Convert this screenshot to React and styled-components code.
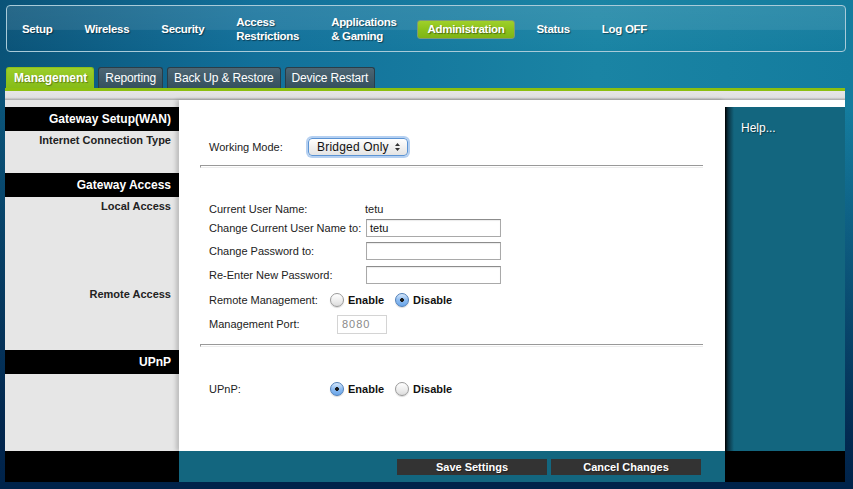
import React from "react";
import styled, { createGlobalStyle } from "styled-components";

const GlobalStyle = createGlobalStyle`
	html, body {
		margin: 0;
		padding: 0;
	}
	body {
		width: 853px;
		height: 489px;
		overflow: hidden;
		font-family: "Liberation Sans", Arial, sans-serif;
		background:
			linear-gradient(180deg, rgba(0, 20, 50, 0) 0, rgba(0, 20, 50, 0) 110px, rgba(0, 30, 70, 0.85) 430px, #00234a 480px),
			linear-gradient(90deg, #0a5378 0, #12709a 30%, #1a84a4 70%, #147c9e 100%);
	}
`;

const navItems = [
	{ label: "Setup" },
	{ label: "Wireless" },
	{ label: "Security" },
	{ label: ["Access", "Restrictions"] },
	{ label: ["Applications", "& Gaming"] },
	{ label: "Administration", active: true },
	{ label: "Status" },
	{ label: "Log OFF" },
];

const tabs = [
	{ label: "Management", active: true },
	{ label: "Reporting" },
	{ label: "Back Up & Restore" },
	{ label: "Device Restart" },
];

function Radio({ checked, label }) {
	return (
		<RadioWrap>
			<RadioDot checked={checked} />
			<RadioLabel>{label}</RadioLabel>
		</RadioWrap>
	);
}

function App() {
	return (
		<>
			<GlobalStyle />
			<Page>
				<NavBox>
					{navItems.map((item, i) => (
						<NavItem key={i} active={item.active}>
							{Array.isArray(item.label)
								? item.label.map((l) => <span key={l}>{l}</span>)
								: item.label}
						</NavItem>
					))}
				</NavBox>

				<Tabs>
					{tabs.map((t) => (
						<Tab key={t.label} active={t.active}>
							{t.label}
						</Tab>
					))}
				</Tabs>

				<Frame>
					<GreyStrip />
					<Columns>
						<Side>
							<SectionBar>Gateway Setup(WAN)</SectionBar>
							<SideArea h={42}>
								<SideLabel>Internet Connection Type</SideLabel>
							</SideArea>
							<SectionBar>Gateway Access</SectionBar>
							<SideArea h={153}>
								<SideLabel>Local Access</SideLabel>
								<SideLabel top={75}>Remote Access</SideLabel>
							</SideArea>
							<SectionBar>UPnP</SectionBar>
						</Side>

						<Content>
							<Row h={24}>
								<Label w={99}>Working Mode:</Label>
								<Select>
									<span>Bridged Only</span>
									<svg width="7" height="10" viewBox="0 0 7 10">
										<path d="M3.5 1 L6 4 L1 4 Z M3.5 9 L6 6 L1 6 Z" fill="#333" />
									</svg>
								</Select>
							</Row>
							<Rule />
							<Row h={16} top={33}>
								<Label w={156}>Current User Name:</Label>
								<Value>tetu</Value>
							</Row>
							<Row h={22}>
								<Label w={157}>Change Current User Name to:</Label>
								<TextInput>tetu</TextInput>
							</Row>
							<Row h={24}>
								<Label w={157}>Change Password to:</Label>
								<TextInput />
							</Row>
							<Row h={24}>
								<Label w={157}>Re-Enter New Password:</Label>
								<TextInput />
							</Row>
							<Row h={26}>
								<Label w={121}>Remote Management:</Label>
								<Radio label="Enable" />
								<Radio checked label="Disable" />
							</Row>
							<Row h={22}>
								<Label w={128}>Management Port:</Label>
								<PortInput>8080</PortInput>
							</Row>
							<Rule top={9} />
							<Row h={24} top={30}>
								<Label w={121}>UPnP:</Label>
								<Radio checked label="Enable" />
								<Radio label="Disable" />
							</Row>
						</Content>

						<Help>
							<HelpText>Help...</HelpText>
						</Help>
					</Columns>

					<Footer>
						<FooterSide />
						<FooterMain>
							<ActionButton>Save Settings</ActionButton>
							<ActionButton>Cancel Changes</ActionButton>
						</FooterMain>
						<FooterSide />
					</Footer>
				</Frame>
			</Page>
		</>
	);
}

export default App;

const Page = styled.div`
	width: 853px;
	height: 489px;
	padding-top: 5px;
	box-sizing: border-box;
`;

const NavBox = styled.div`
	margin-left: 6px;
	width: 840px;
	height: 47px;
	box-sizing: border-box;
	border: 1px solid #a9cbd9;
	border-radius: 4px;
	display: flex;
	align-items: center;
	gap: 10px;
	padding: 1px 0 0 4px;
	background: linear-gradient(
		180deg,
		rgba(255, 255, 255, 0.12) 0,
		rgba(255, 255, 255, 0.1) 52%,
		rgba(255, 255, 255, 0.02) 54%,
		rgba(255, 255, 255, 0) 100%
	);
`;

const NavItem = styled.div`
	display: flex;
	flex-direction: column;
	justify-content: center;
	padding: 0 10px;
	height: ${(p) => (p.active ? "17px" : "auto")};
	font-size: 11.5px;
	letter-spacing: -0.3px;
	font-weight: bold;
	line-height: 14px;
	color: #fff;
	text-shadow: 1px 1px 1px rgba(0, 0, 0, 0.45);
	white-space: nowrap;
	border-radius: 3px;
	border: 1px solid ${(p) => (p.active ? "#7d9a78" : "transparent")};
	background: ${(p) =>
		p.active ? "linear-gradient(180deg, #9fd02a 0, #8cc21c 50%, #7fb515 100%)" : "none"};
	margin: ${(p) => (p.active ? "0 0 0 -1px" : "0")};
`;

const Tabs = styled.div`
	display: flex;
	gap: 4px;
	margin: 15px 0 0 6px;
	height: 21px;
	align-items: flex-end;
`;

const Tab = styled.div`
	height: 21px;
	box-sizing: border-box;
	padding: 0 6px 0 ${(p) => (p.active ? "7px" : "6px")};
	display: flex;
	align-items: center;
	font-size: 12px;
	letter-spacing: ${(p) => (p.active ? "0" : "-0.15px")};
	font-weight: ${(p) => (p.active ? "bold" : "normal")};
	color: #fff;
	text-shadow: ${(p) => (p.active ? "1px 1px 1px rgba(0,0,0,0.35)" : "none")};
	border-radius: 3px 3px 0 0;
	border: 1px solid ${(p) => (p.active ? "#8cbf1a" : "#2a3d48")};
	border-bottom: none;
	background: ${(p) =>
		p.active
			? "linear-gradient(180deg, #9bce2a 0, #86bc18 100%)"
			: "linear-gradient(180deg, #4d6674 0, #34505e 100%)"};
`;

const Frame = styled.div`
	margin-left: 5px;
	width: 840px;
	border-top: 3px solid #8cbf10;
`;

const GreyStrip = styled.div`
	height: 9px;
	background: linear-gradient(180deg, #e6e6e6 0, #e0e0e0 70%, #a9a9a9 100%);
`;

const Columns = styled.div`
	display: grid;
	grid-template-columns: 174px 546px 120px;
	height: 351px;
`;

const Side = styled.div`
	background: #e6e6e6;
	padding-top: 7px;
	display: flex;
	flex-direction: column;
`;

const SectionBar = styled.div`
	height: 24px;
	background: #000;
	color: #fff;
	font-size: 12px;
	font-weight: bold;
	display: flex;
	align-items: center;
	justify-content: flex-end;
	padding-right: 8px;
	flex-shrink: 0;
`;

const SideArea = styled.div`
	height: ${(p) => p.h}px;
	display: flex;
	flex-direction: column;
	align-items: flex-end;
	padding: 3px 8px 0 0;
	box-sizing: border-box;
`;

const SideLabel = styled.div`
	font-size: 11px;
	line-height: 13px;
	font-weight: bold;
	color: #222;
	margin-top: ${(p) => p.top || 0}px;
`;

const Content = styled.div`
	background: #fff;
	box-shadow: -3px 0 4px rgba(0, 0, 0, 0.18);
	padding: 35px 22px 0 30px;
	display: flex;
	flex-direction: column;
`;

const Row = styled.div`
	height: ${(p) => p.h}px;
	margin-top: ${(p) => p.top || 0}px;
	display: flex;
	align-items: center;
	font-size: 11px;
	color: #222;
`;

const Label = styled.div`
	width: ${(p) => p.w}px;
	flex-shrink: 0;
	white-space: nowrap;
`;

const Value = styled.div`
	font-size: 11px;
`;

const Select = styled.div`
	width: 100px;
	height: 18px;
	box-sizing: border-box;
	border: 1px solid #5c94d4;
	border-radius: 4px;
	box-shadow: 0 0 0 2px rgba(120, 170, 230, 0.55);
	background: linear-gradient(180deg, #ffffff 0, #f1f1f1 50%, #e4e4e4 100%);
	display: flex;
	align-items: center;
	justify-content: space-between;
	padding: 0 6px 0 8px;
	font-size: 12px;
	color: #111;
	letter-spacing: 0.2px;
`;

const Rule = styled.div`
	margin: ${(p) => p.top || 6}px 0 0 -9px;
	height: 1px;
	border-top: 1px solid #999;
	border-bottom: 1px solid #ececec;
	border-left: 1px solid #999;
`;

const TextInput = styled.div`
	width: 135px;
	height: 18px;
	box-sizing: border-box;
	border: 1px solid #a9a9a9;
	border-top-color: #8c8c8c;
	box-shadow: inset 0 1px 1px rgba(0, 0, 0, 0.08);
	padding: 0 3px;
	font-size: 11px;
	display: flex;
	align-items: center;
	color: #111;
`;

const PortInput = styled.div`
	width: 50px;
	height: 19px;
	box-sizing: border-box;
	border: 1px solid #d4d4d4;
	padding: 0 4px;
	font-size: 11px;
	letter-spacing: 1px;
	display: flex;
	align-items: center;
	color: #8a8a8a;
`;

const RadioWrap = styled.div`
	display: flex;
	align-items: center;
	margin-right: 11px;
`;

const RadioDot = styled.span`
	width: 14px;
	height: 14px;
	box-sizing: border-box;
	border-radius: 50%;
	border: 1px solid ${(p) => (p.checked ? "#4f7fb8" : "#9a9a9a")};
	background: ${(p) =>
		p.checked
			? "radial-gradient(circle at 50% 50%, #1a1a1a 0, #1a1a1a 1.6px, transparent 2.2px), linear-gradient(180deg, #d7e8fb 0, #8ebcf0 50%, #6aa6ea 100%)"
			: "linear-gradient(180deg, #ffffff 0, #ececec 60%, #dcdcdc 100%)"};
	box-shadow: 0 1px 1px rgba(0, 0, 0, 0.15);
	margin-right: 4px;
`;

const RadioLabel = styled.span`
	font-size: 11px;
	font-weight: bold;
	color: #111;
`;

const Help = styled.div`
	background: linear-gradient(90deg, #000 0, #0a3140 3px, #13667f 9px, #13667f 100%);
	margin-top: 7px;
	box-shadow: 0 -7px 0 #fff;
	padding: 14px 0 0 16px;
`;

const HelpText = styled.div`
	font-size: 12px;
	color: #fff;
	text-shadow: 1px 1px 1px rgba(0, 0, 0, 0.5);
`;

const Footer = styled.div`
	display: grid;
	grid-template-columns: 174px 546px 120px;
	height: 31px;
`;

const FooterSide = styled.div`
	background: #000;
`;

const FooterMain = styled.div`
	background: #13667f;
	display: flex;
	justify-content: flex-end;
	align-items: flex-start;
	gap: 4px;
	padding: 8px 24px 0 0;
`;

const ActionButton = styled.div`
	width: 150px;
	height: 16px;
	background: #333;
	color: #fff;
	font-size: 11px;
	font-weight: bold;
	display: flex;
	align-items: center;
	justify-content: center;
	text-shadow: 1px 1px 1px rgba(0, 0, 0, 0.4);
`;
